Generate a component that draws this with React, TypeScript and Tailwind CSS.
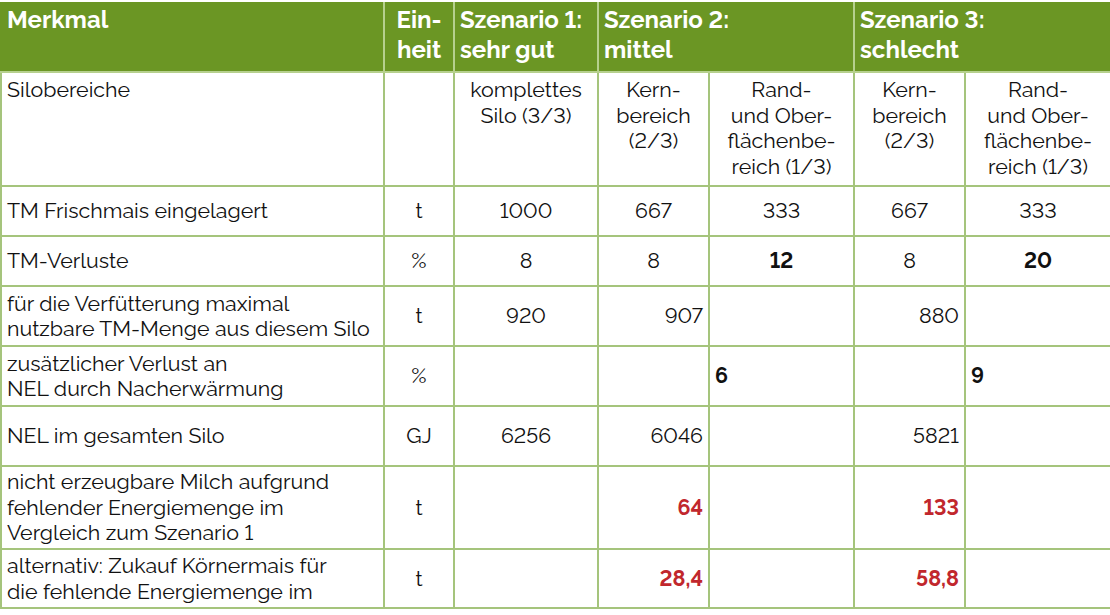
import React from 'react';

type Cell = {
  v?: string;
  align?: 'left' | 'center' | 'right';
  bold?: boolean;
  red?: boolean;
};

type Row = {
  label: string[];
  unit: string;
  h: string;
  cells: Cell[];
};

const rows: Row[] = [
  {
    label: ['TM Frischmais eingelagert'],
    unit: 't',
    h: 'h-[50px]',
    cells: [{ v: '1000' }, { v: '667' }, { v: '333' }, { v: '667' }, { v: '333' }],
  },
  {
    label: ['TM-Verluste'],
    unit: '%',
    h: 'h-[50px]',
    cells: [{ v: '8' }, { v: '8' }, { v: '12', bold: true }, { v: '8' }, { v: '20', bold: true }],
  },
  {
    label: ['für die Verfütterung maximal', 'nutzbare TM-Menge aus diesem Silo'],
    unit: 't',
    h: 'h-[60px]',
    cells: [{ v: '920' }, { v: '907', align: 'right' }, {}, { v: '880', align: 'right' }, {}],
  },
  {
    label: ['zusätzlicher Verlust an', 'NEL durch Nacherwärmung'],
    unit: '%',
    h: 'h-[60px]',
    cells: [{}, {}, { v: '6', bold: true, align: 'left' }, {}, { v: '9', bold: true, align: 'left' }],
  },
  {
    label: ['NEL im gesamten Silo'],
    unit: 'GJ',
    h: 'h-[60px]',
    cells: [{ v: '6256' }, { v: '6046', align: 'right' }, {}, { v: '5821', align: 'right' }, {}],
  },
  {
    label: ['nicht erzeugbare Milch aufgrund', 'fehlender Energiemenge im', 'Vergleich zum Szenario 1'],
    unit: 't',
    h: 'h-[83px]',
    cells: [{}, { v: '64', align: 'right', bold: true, red: true }, {}, { v: '133', align: 'right', bold: true, red: true }, {}],
  },
  {
    label: ['alternativ: Zukauf Körnermais für', 'die fehlende Energiemenge im'],
    unit: 't',
    h: 'h-[59px]',
    cells: [{}, { v: '28,4', align: 'right', bold: true, red: true }, {}, { v: '58,8', align: 'right', bold: true, red: true }, {}],
  },
];

const alignClass = {
  left: 'text-left',
  center: 'text-center',
  right: 'text-right',
};

function Lines({ lines }: { lines: string[] }) {
  return (
    <>
      {lines.map((l, i) => (
        <React.Fragment key={i}>
          {l}
          {i < lines.length - 1 && <br />}
        </React.Fragment>
      ))}
    </>
  );
}

export default function App() {
  const td = 'border-2 border-[#a5c47c] px-[5px] text-[21.4px] leading-[25.5px] text-[#111] whitespace-nowrap';
  const th = 'border-2 border-[#b6d08e] px-[5px] pt-[1px] align-top text-left text-[24px] font-bold leading-[30px] text-white whitespace-nowrap';

  return (
    <div className="min-h-screen overflow-hidden bg-white pt-[2px] lining-nums" style={{ fontFamily: 'Raleway, "Open Sans", Lato, sans-serif' }}>
      <table className="w-[1110px] table-fixed border-collapse">
        <colgroup>
          <col className="w-[383px]" />
          <col className="w-[70px]" />
          <col className="w-[144px]" />
          <col className="w-[111px]" />
          <col className="w-[145px]" />
          <col className="w-[111px]" />
          <col className="w-[146px]" />
        </colgroup>
        <thead>
          <tr className="h-[69px] bg-[#6b9624]">
            <th className={`${th} border-l-[#6b9624] border-t-[#6b9624]`}>Merkmal</th>
            <th className={`${th} border-t-[#6b9624] !text-center`}>
              Ein-
              <br />
              heit
            </th>
            <th className={`${th} border-t-[#6b9624]`}>
              Szenario 1:
              <br />
              sehr gut
            </th>
            <th colSpan={2} className={`${th} border-t-[#6b9624]`}>
              Szenario 2:
              <br />
              mittel
            </th>
            <th colSpan={2} className={`${th} border-t-[#6b9624]`}>
              Szenario 3:
              <br />
              schlecht
            </th>
          </tr>
        </thead>
        <tbody>
          <tr className="h-[114px]">
            <td className={`${td} pt-[4px] align-top`}>Silobereiche</td>
            <td className={td}></td>
            <td className={`${td} pt-[4px] align-top text-center`}>
              komplettes
              <br />
              Silo (3/3)
            </td>
            <td className={`${td} pt-[4px] align-top text-center`}>
              Kern-
              <br />
              bereich
              <br />
              (2/3)
            </td>
            <td className={`${td} pt-[4px] align-top text-center`}>
              Rand-
              <br />
              und Ober-
              <br />
              flächenbe-
              <br />
              reich (1/3)
            </td>
            <td className={`${td} pt-[4px] align-top text-center`}>
              Kern-
              <br />
              bereich
              <br />
              (2/3)
            </td>
            <td className={`${td} pt-[4px] align-top text-center`}>
              Rand-
              <br />
              und Ober-
              <br />
              flächenbe-
              <br />
              reich (1/3)
            </td>
          </tr>
          {rows.map((r, i) => (
            <tr key={i} className={r.h}>
              <td className={`${td} align-middle`}>
                <Lines lines={r.label} />
              </td>
              <td className={`${td} align-middle text-center`}>{r.unit}</td>
              {r.cells.map((c, j) => (
                <td
                  key={j}
                  className={`${td} align-middle ${alignClass[c.align ?? 'center']} ${c.bold ? 'font-bold' : ''} ${
                    c.red ? 'text-[#c1272d]' : ''
                  }`}
                >
                  {c.v}
                </td>
              ))}
            </tr>
          ))}
        </tbody>
      </table>
    </div>
  );
}
